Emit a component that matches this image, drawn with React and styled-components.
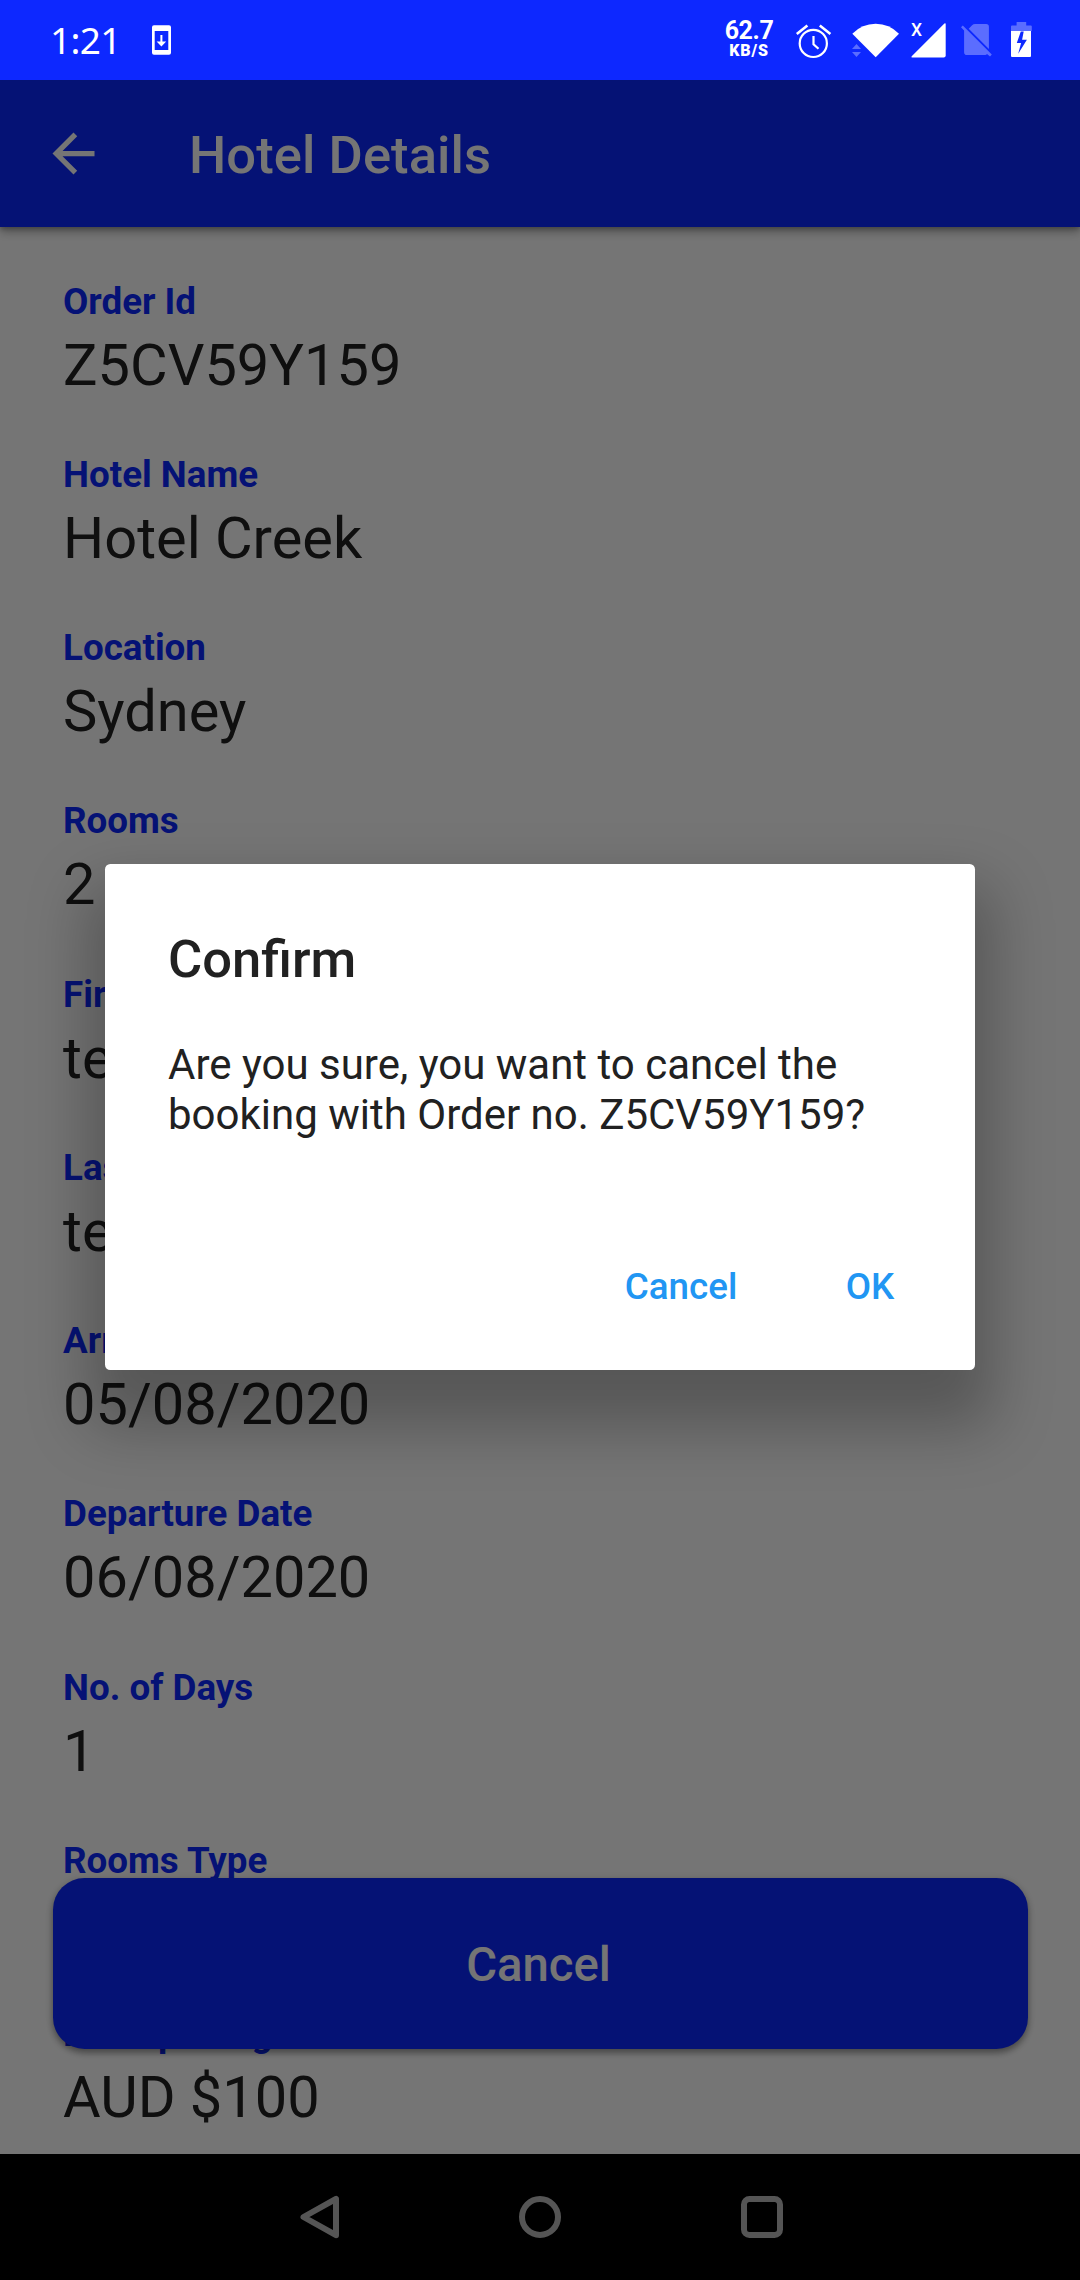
import React from "react";
import styled, { createGlobalStyle } from "styled-components";

const GlobalStyle = createGlobalStyle`
  *, *::before, *::after { box-sizing: border-box; }
  body { margin: 0; background: #000; font-family: Roboto, "Liberation Sans", sans-serif; }
  h1, h2, p, dl, dt, dd { margin: 0; font-weight: inherit; }
  button { font-family: inherit; border: 0; padding: 0; }
  svg { display: block; }
`;

const Phone = styled.div`
  width: 1080px;
  height: 2280px;
  display: flex;
  flex-direction: column;
  overflow: hidden;
`;

const StatusBar = styled.header`
  height: 80px;
  flex: none;
  display: flex;
  align-items: center;
  justify-content: space-between;
  padding: 0 48px 0 50px;
  background: #0d28ff;
  color: #fff;
`;

const StatusGroup = styled.div`
  height: 80px;
  display: flex;
  align-items: center;
`;

const Clock = styled.span`
  width: 102px;
  font: 400 37px/79px "Noto Sans", sans-serif;
  letter-spacing: -0.7px;
  height: 80px;
`;

const NetSpeed = styled.div`
  width: 52px;
  height: 46px;
  margin: 2px 19px 0 0;
  display: flex;
  flex-direction: column;
  align-items: center;
`;

const SpeedValue = styled.span`
  font-size: 25px;
  font-weight: 700;
  line-height: 25px;
  letter-spacing: -0.4px;
`;

const SpeedUnit = styled.span`
  font-size: 16px;
  font-weight: 900;
  line-height: 16px;
  letter-spacing: 0.8px;
`;

const AppScreen = styled.main`
  position: relative;
  height: 2074px;
  flex: none;
  display: flex;
  flex-direction: column;
  overflow: hidden;
  background: #fff;
`;

const AppBar = styled.div`
  position: relative;
  height: 147px;
  flex: none;
  display: flex;
  align-items: center;
  gap: 84px;
  padding-left: 42px;
  background: #0d28ff;
  color: #fff;
  box-shadow: 0 5px 9px rgba(0, 0, 0, 0.3), 0 2px 4px rgba(0, 0, 0, 0.2);
`;

const BarTitle = styled.h1`
  font-size: 52.5px;
  font-weight: 500;
  line-height: 62px;
  letter-spacing: 0.08px;
  padding-top: 2px;
`;

const Details = styled.dl`
  display: flex;
  flex-direction: column;
  gap: 54.25px;
  padding: 52.5px 63px 0;
`;

const Field = styled.div`
  display: flex;
  flex-direction: column;
  flex: none;
  gap: 7px;
`;

const FieldLabel = styled.dt`
  font-size: 36.75px;
  font-weight: 700;
  line-height: 44px;
  color: #0d28ff;
`;

const FieldValue = styled.dd`
  font-size: 57.75px;
  line-height: 68px;
  color: #212121;
`;

const FloatingButton = styled.button`
  position: absolute;
  left: 52.5px;
  right: 52.5px;
  bottom: 105px;
  height: 171px;
  padding: 2px 3px 0 0;
  border-radius: 31.5px;
  background: #0d28ff;
  color: #fff;
  font-size: 47.25px;
  font-weight: 500;
  line-height: 56px;
  box-shadow: 0 4px 6px rgba(0, 0, 0, 0.3), 0 2px 10px rgba(0, 0, 0, 0.16);
`;

const Barrier = styled.div`
  position: absolute;
  inset: 0;
  display: flex;
  align-items: center;
  justify-content: center;
  background: rgba(0, 0, 0, 0.54);
`;

const Dialog = styled.section`
  width: 870px;
  height: 506.5px;
  display: flex;
  flex-direction: column;
  padding: 63px 21px 42px 63px;
  border-radius: 5.25px;
  background: #fff;
  color: #212121;
  box-shadow: 0 40px 60px 18px rgba(0, 0, 0, 0.26);
`;

const DialogTitle = styled.h2`
  font-size: 52.5px;
  font-weight: 500;
  line-height: 65px;
`;

const DialogText = styled.p`
  margin-top: 48.5px;
  font-size: 42px;
  line-height: 49.5px;
  white-space: pre-line;
`;

const DialogActions = styled.div`
  margin-top: auto;
  display: flex;
  justify-content: flex-end;
  gap: 21px;
`;

const DialogAction = styled.button`
  width: 168px;
  height: 82px;
  background: none;
  color: #2196f3;
  font-size: 36.75px;
  font-weight: 500;
  line-height: 44px;
`;

const NavBar = styled.nav`
  height: 126px;
  flex: none;
  display: flex;
  align-items: center;
  justify-content: center;
  gap: 162px;
  background: #000;
`;

const FIELDS = [
  ["Order Id", "Z5CV59Y159"],
  ["Hotel Name", "Hotel Creek"],
  ["Location", "Sydney"],
  ["Rooms", "2"],
  ["First Name", "test"],
  ["Last Name", "test"],
  ["Arrival Date", "05/08/2020"],
  ["Departure Date", "06/08/2020"],
  ["No. of Days", "1"],
  ["Rooms Type", "Double"],
  ["Price per night", "AUD $100"],
];

const UpdateIcon = () => (
  <svg width="19" height="80" viewBox="152 0 19 80" fill="#fff">
    <path
      fillRule="evenodd"
      d="M154 25.3h15a2 2 0 0 1 2 2v25.4a2 2 0 0 1-2 2h-15a2 2 0 0 1-2-2V27.3a2 2 0 0 1 2-2zM154.7 31v19h13.6V31z"
    />
    <path d="M160.4 35h2v6.6h3.8l-4.8 5-4.8-5h3.8z" />
  </svg>
);

const SignalIcons = () => (
  <svg width="238" height="80" viewBox="794 0 238 80" fill="#fff">
    <g fill="none" stroke="#fff" strokeWidth="2.2">
      <circle cx="813.3" cy="43.4" r="13.6" />
      <path d="M796.8 34l10.6-8.6M819.8 25.4l10.6 8.6" strokeWidth="2.6" />
      <path d="M813.5 36v8.2l5 4.6" />
    </g>
    <path d="M875.7 57.3L852.3 33.7Q862 23.7 875.7 23.7T899 33.7z" />
    <path d="M852 49h9l-4.5-5zM852 52h9l-4.5 5z" opacity=".32" />
    <text x="911" y="35.6" fontFamily="Roboto, sans-serif" fontSize="17.5" fontWeight="500">
      X
    </text>
    <path d="M945.7 24.4v31a2 2 0 0 1-2 2h-31.3q-1.8 0-.7-1.2L944.4 23.6q1.3-1 1.3.8z" />
    <g opacity=".32">
      <path d="M968.7 28.7l3.4-3.5q1.2-1.2 3-1.2h11a2.8 2.8 0 0 1 2.8 2.8v22.1z" />
      <path d="M961 27.2l1.8-1.8 29 29-1.8 2.2-3-2.6q-.6 1-1.8 1h-18.3a2.8 2.8 0 0 1-2.8-2.8V30.4z" />
    </g>
    <path d="M1011 31v-4.4a1 1 0 0 1 1-1h4.6v-3.7h9.6v3.7h4.6a1 1 0 0 1 1 1V31z" opacity=".32" />
    <path
      fillRule="evenodd"
      d="M1011 31h20v25a1 1 0 0 1-1 1h-18a1 1 0 0 1-1-1zM1020.8 31.6l-4 11.4h4.3l-2.9 10.7 8.7-13.9h-4.8l1.6-8.2z"
    />
  </svg>
);

const BackArrow = () => (
  <svg width="63" height="63" viewBox="0 0 24 24" fill="currentColor">
    <path d="M20 11H7.83l5.59-5.59L12 4l-8 8 8 8 1.41-1.41L7.83 13H20v-2z" />
  </svg>
);

const NavIcon = ({ children }) => (
  <svg width="60" height="60" viewBox="0 0 60 60" fill="none" stroke="#555" strokeWidth="6" strokeLinejoin="round">
    {children}
  </svg>
);

export default function App() {
  return (
    <>
      <GlobalStyle />
      <Phone>
        <StatusBar>
          <StatusGroup>
            <Clock>1:21</Clock>
            <UpdateIcon />
          </StatusGroup>
          <StatusGroup>
            <NetSpeed>
              <SpeedValue>62.7</SpeedValue>
              <SpeedUnit>KB/S</SpeedUnit>
            </NetSpeed>
            <SignalIcons />
          </StatusGroup>
        </StatusBar>
        <AppScreen>
          <AppBar>
            <BackArrow />
            <BarTitle>Hotel Details</BarTitle>
          </AppBar>
          <Details>
            {FIELDS.map(([label, value]) => (
              <Field key={label}>
                <FieldLabel>{label}</FieldLabel>
                <FieldValue>{value}</FieldValue>
              </Field>
            ))}
          </Details>
          <FloatingButton>Cancel</FloatingButton>
          <Barrier>
            <Dialog>
              <DialogTitle>Confirm</DialogTitle>
              <DialogText>
                {"Are you sure, you want to cancel the\nbooking with Order no. Z5CV59Y159?"}
              </DialogText>
              <DialogActions>
                <DialogAction>Cancel</DialogAction>
                <DialogAction>OK</DialogAction>
              </DialogActions>
            </Dialog>
          </Barrier>
        </AppScreen>
        <NavBar>
          <NavIcon>
            <path d="M48 11.8v36.4L15.5 30z" />
          </NavIcon>
          <NavIcon>
            <circle cx="30" cy="30" r="18" />
          </NavIcon>
          <NavIcon>
            <rect x="12" y="12" width="36" height="36" rx="5.5" />
          </NavIcon>
        </NavBar>
      </Phone>
    </>
  );
}
